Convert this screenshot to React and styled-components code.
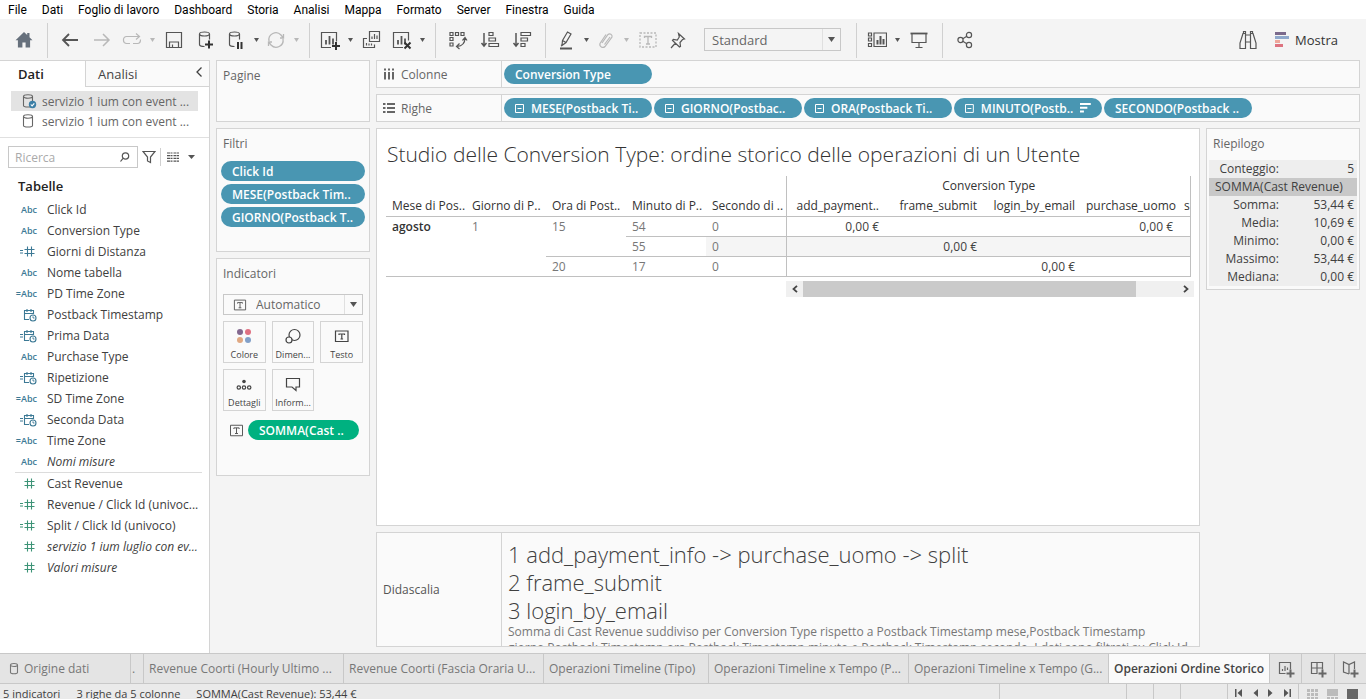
import React from "react";
import styled, { createGlobalStyle } from "styled-components";

const BLUE = "#4996b2";
const GREEN = "#00b180";
const LINE = "#d4d4d4";
const FONT = `"Open Sans", "Noto Sans", sans-serif`;

const GlobalStyle = createGlobalStyle`
  * { box-sizing: border-box; }
  body { margin: 0; }
  body, button, input, select { font-family: ${FONT}; font-size: 12px; color: #404040; }
  button { border: 0; padding: 0; background: none; }
`;

/* ---------- page frame ---------- */
const Page = styled.div`
  height: 100vh;
  display: flex;
  flex-direction: column;
  background: #f4f4f4;
  overflow: hidden;
`;
const MenuBar = styled.nav`
  flex: none;
  display: flex;
  gap: 15px;
  height: 19px;
  padding: 2px 0 0 8px;
  background: #fff;
`;
const MenuItem = styled.button`
  font-family: Roboto, sans-serif;
  color: #000;
  line-height: 17px;
  white-space: nowrap;
`;
const Toolbar = styled.header`
  flex: none;
  display: flex;
  height: 41px;
`;
const ToolGroup = styled.div`
  display: flex;
  align-items: center;
  padding: 0 ${(p) => p.$end || 6}px 0 ${(p) => p.$start ?? 6}px;
`;
const Divider = styled.div`
  width: 1px;
  height: 35px;
  margin-top: 4px;
  background: #d0d0d0;
`;
const IconButton = styled.button`
  display: flex;
  align-items: center;
  justify-content: center;
  width: ${(p) => p.$w || 32}px;
  height: 30px;
  color: ${(p) => (p.$off ? "#b8b8b8" : "#555")};
`;
const CaretButton = styled.button`
  display: flex;
  align-items: center;
  justify-content: center;
  width: 12px;
  height: 30px;
  color: ${(p) => (p.$off ? "#b8b8b8" : "#555")};
`;
const SelectBox = styled.div`
  display: flex;
  align-items: center;
  width: ${(p) => (p.$wide ? "auto" : "137px")};
  height: ${(p) => (p.$wide ? 21 : 23)}px;
  margin-left: ${(p) => (p.$wide ? 0 : 12)}px;
  border: 1px solid #c8c8c8;
  color: #555;
`;
const Select = styled.select`
  flex: 1;
  min-width: 0;
  appearance: none;
  border: 0;
  outline: 0;
  padding: 0 0 0 ${(p) => p.$pad || 0}px;
  background: transparent;
  color: #666;
  font-size: ${(p) => p.$size || 12}px;
`;
const SelectArrow = styled.span`
  display: flex;
  align-items: center;
  justify-content: center;
  align-self: stretch;
  width: 18px;
  border-left: 1px solid #e0e0e0;
`;
const Spacer = styled.div`
  flex: 1;
`;
const ShowButton = styled.button`
  display: flex;
  align-items: center;
  gap: 6px;
  padding: 0 22px 0 11px;
  font-size: 13px;
  color: #333;
`;

const Body = styled.div`
  flex: 1;
  min-height: 0;
  display: flex;
`;

/* ---------- data pane ---------- */
const DataPane = styled.aside`
  width: 210px;
  flex: none;
  background: #fff;
  border: solid ${LINE};
  border-width: 1px 1px 0 0;
`;
const PaneTabs = styled.div`
  display: flex;
  height: 26px;
`;
const ActiveTab = styled.button`
  width: 85px;
  padding-left: 18px;
  text-align: left;
  font-size: 13px;
  font-weight: 600;
  color: #222;
`;
const OtherTab = styled.div`
  flex: 1;
  display: flex;
  align-items: center;
  justify-content: space-between;
  padding: 0 6px 0 12px;
  border: solid ${LINE};
  border-width: 0 0 1px 1px;
  background: #fafafa;
`;
const TabLabel = styled.button`
  font-size: 13px;
  color: #444;
`;
const SourceList = styled.div`
  padding: 4px 11px 6px;
  border-bottom: 1px solid #e0e0e0;
`;
const Source = styled.button`
  display: flex;
  align-items: center;
  gap: 5px;
  width: 100%;
  height: 20px;
  padding-left: 10px;
  background: ${(p) => (p.$selected ? "#e3e3e3" : "transparent")};
  color: #666;
  white-space: nowrap;
`;
const SearchRow = styled.div`
  display: flex;
  align-items: center;
  height: 38px;
  padding-left: 8px;
`;
const SearchBox = styled.label`
  display: flex;
  align-items: center;
  width: 130px;
  height: 22px;
  padding: 0 6px;
  border: 1px solid #c8c8c8;
`;
const SearchInput = styled.input`
  flex: 1;
  min-width: 0;
  border: 0;
  outline: 0;
  padding: 0;
  &::placeholder { color: #aaa; }
`;
const SmallDivider = styled.div`
  width: 1px;
  height: 18px;
  background: #d0d0d0;
`;
const TablesTitle = styled.h2`
  margin: 0 0 3px;
  padding-left: 18px;
  font-size: 13px;
  line-height: 20px;
  font-weight: 600;
  color: #222;
`;
const FieldList = styled.ul`
  list-style: none;
  margin: 0 7px 0 15px;
  padding: 0;
  & + & { border-top: 1px solid #dcdcdc; }
`;
const Field = styled.li`
  display: flex;
  align-items: center;
  height: 21px;
  white-space: nowrap;
  font-style: ${(p) => (p.$italic ? "italic" : "normal")};
`;
const FieldIcon = styled.span`
  display: flex;
  align-items: center;
  justify-content: flex-end;
  width: 22px;
  margin-right: 10px;
  font-size: 9px;
  font-weight: 600;
  font-style: normal;
  color: ${(p) => (p.$measure ? "#3d9377" : "#3c7995")};
`;

/* ---------- shelves and cards ---------- */
const CardColumn = styled.div`
  flex: none;
  width: 154px;
  margin-left: 6px;
  display: flex;
  flex-direction: column;
  gap: 6px;
`;
const Card = styled.section`
  display: flex;
  flex-direction: column;
  min-height: ${(p) => p.$min || 0}px;
  padding: 5px 4px;
  border: 1px solid ${LINE};
  background: #fafafa;
`;
const CardTitle = styled.h3`
  margin: 0 2px 7px;
  font-size: 12px;
  font-weight: 400;
  line-height: 20px;
  color: #666;
`;
const PillStack = styled.div`
  display: flex;
  flex-direction: column;
  gap: 3px;
`;
const Pill = styled.button`
  display: flex;
  align-items: center;
  gap: 7px;
  width: ${(p) => (p.$w ? p.$w + "px" : "auto")};
  height: 20px;
  padding: 0 11px;
  border-radius: 10px;
  background: ${(p) => (p.$measure ? GREEN : BLUE)};
  color: #fff;
  font-weight: 600;
  white-space: nowrap;
`;
const MarksBody = styled.div`
  display: flex;
  flex-direction: column;
  gap: 6px;
  padding: 3px 2px;
`;
const MarkGrid = styled.div`
  display: grid;
  grid-template-columns: repeat(3, 1fr);
  gap: 6px;
`;
const MarkButton = styled.button`
  display: flex;
  flex-direction: column;
  align-items: center;
  justify-content: space-between;
  height: 42px;
  padding: 5px 0 1px;
  border: 1px solid ${LINE};
  font-size: 9px;
  line-height: 13px;
  color: #444;
`;
const MarkPill = styled.div`
  display: flex;
  align-items: center;
  gap: 4px;
  padding: 3px 0 0 6px;
  color: #555;
`;

const Workspace = styled.main`
  flex: 1;
  min-width: 0;
  display: flex;
  flex-direction: column;
  gap: 6px;
  padding: 0 6px 6px;
`;
const Shelf = styled.section`
  flex: none;
  display: flex;
  height: 28px;
  border: 1px solid ${LINE};
  background: #fafafa;
`;
const ShelfLabel = styled.div`
  display: flex;
  align-items: center;
  gap: 6px;
  width: 125px;
  padding-left: 6px;
  border-right: 1px solid ${LINE};
  color: #666;
`;
const ShelfPills = styled.div`
  display: flex;
  align-items: center;
  gap: 2px;
  padding-left: 2px;
`;
const Columns = styled.div`
  flex: 1;
  min-height: 0;
  display: flex;
  align-items: flex-start;
  gap: 6px;
`;
const SheetColumn = styled.div`
  flex: 1;
  min-width: 0;
  align-self: stretch;
  display: flex;
  flex-direction: column;
  gap: 6px;
`;
const Sheet = styled.section`
  flex: 1;
  min-height: 0;
  border: 1px solid ${LINE};
  background: #fff;
  overflow: hidden;
`;
const SheetTitle = styled.h1`
  margin: 10px 10px 7px;
  font-size: 21px;
  line-height: 30px;
  font-weight: 300;
  color: #333;
  white-space: nowrap;
`;
const TableWrap = styled.div`
  padding: 0 8px 0 9px;
`;
const Table = styled.table`
  width: 100%;
  table-layout: fixed;
  border-collapse: collapse;
  line-height: 19px;
`;
const cellBorders = (p) => `
  border-right: ${p.$right ? "1px solid #c0c0c0" : "0"};
  border-bottom: ${p.$bottom ? "1px solid #c0c0c0" : "0"};
`;
const Th = styled.th`
  height: 20px;
  padding: 0 5px 0 6px;
  font-weight: ${(p) => (p.$bold ? 600 : p.$plain ? 400 : 500)};
  text-align: ${(p) => p.$align || "left"};
  vertical-align: top;
  white-space: nowrap;
  overflow: hidden;
  color: ${(p) => (p.$soft ? "#777" : "#333")};
  background: ${(p) => (p.$band ? "#f5f5f5" : "transparent")};
  ${cellBorders}
`;
const Td = styled.td`
  height: 20px;
  padding: 0 5px 0 0;
  text-align: right;
  white-space: nowrap;
  color: #404040;
  background: ${(p) => (p.$band ? "#f5f5f5" : "transparent")};
  ${cellBorders}
`;
const ScrollBar = styled.div`
  display: flex;
  height: 16px;
  margin: 4px 5px 0 409px;
  background: #f0f0f0;
`;
const ScrollArrow = styled.button`
  display: flex;
  align-items: center;
  justify-content: center;
  width: 17px;
  color: #444;
`;
const ScrollTrack = styled.div`
  flex: 1;
`;
const ScrollThumb = styled.div`
  width: 89%;
  height: 100%;
  background: #cacaca;
`;

const Caption = styled.section`
  flex: none;
  display: flex;
  height: 115px;
  border: 1px solid ${LINE};
  background: #fafafa;
  overflow: hidden;
`;
const CaptionLabel = styled.div`
  flex: none;
  display: flex;
  align-items: center;
  width: 125px;
  padding-left: 6px;
  border-right: 1px solid ${LINE};
  color: #555;
`;
const CaptionText = styled.div`
  padding: 7px 0 0 6px;
`;
const CaptionLine = styled.p`
  margin: 0;
  font-size: 22px;
  line-height: 28px;
  font-weight: 300;
  white-space: pre;
`;
const CaptionNote = styled.p`
  margin: 0;
  line-height: 16px;
  color: #777;
`;

const Summary = styled.section`
  flex: none;
  width: 154px;
  padding: 5px 2px 3px;
  border: 1px solid ${LINE};
  background: #fafafa;
`;
const SummaryTitle = styled.h3`
  margin: 0 4px 6px;
  font-size: 12px;
  font-weight: 400;
  line-height: 20px;
  color: #666;
`;
const SummaryTable = styled.table`
  width: 100%;
  border-collapse: collapse;
  background: #eee;
  line-height: 18px;
`;
const SummaryHead = styled.th`
  padding: 0 0 0 6px;
  font-weight: 400;
  text-align: left;
  white-space: nowrap;
  background: #c8c8c8;
`;
const SummaryKey = styled.th`
  width: 70px;
  padding: 0;
  font-weight: 400;
  text-align: right;
`;
const SummaryValue = styled.td`
  padding: 0 3px 0 0;
  text-align: right;
`;

/* ---------- sheet tabs and status ---------- */
const SheetTabs = styled.nav`
  flex: none;
  display: flex;
  height: 31px;
  border: solid #c8c8c8;
  border-width: 1px 0;
  background: #e4e4e4;
`;
const SheetTab = styled.button`
  display: flex;
  align-items: center;
  gap: 3px;
  width: ${(p) => p.$w}px;
  padding-left: ${(p) => p.$pad || 5}px;
  border-right: 1px solid #c8c8c8;
  background: ${(p) => (p.$active ? "#fafafa" : "transparent")};
  font-weight: ${(p) => (p.$active ? 600 : 400)};
  color: ${(p) => (p.$active ? "#444" : "#777")};
  white-space: nowrap;
`;
const NewTab = styled.button`
  flex: 1;
  display: flex;
  align-items: center;
  justify-content: center;
  border-right: 1px solid #c8c8c8;
  color: #666;
  &:last-child { border-right: 0; }
`;
const StatusBar = styled.footer`
  flex: none;
  display: flex;
  height: 15px;
  line-height: 20px;
  background: #eaeaea;
  overflow: hidden;
`;
const StatusText = styled.span`
  padding-left: 3px;
  margin-right: 13px;
  font-size: 11px;
  white-space: nowrap;
`;
const StatusCell = styled.div`
  flex: none;
  display: flex;
  justify-content: space-around;
  width: ${(p) => p.$w}px;
  padding: ${(p) => (p.$w > 60 ? "0 3px" : "0")};
  border-left: 1px solid #c8c8c8;
`;
const StatusButton = styled.button`
  display: flex;
  padding-top: 5px;
  color: ${(p) => p.$color || "#555"};
`;

/* ---------- drawings ---------- */
const Svg = ({ w = 20, h = 20, children, ...rest }) => (
  <svg width={w} height={h} viewBox={`0 0 ${w} ${h}`} fill="none" stroke="currentColor" strokeWidth="1.2" aria-hidden="true" {...rest}>
    {children}
  </svg>
);
const Down = ({ w = 5, h = 4 }) => (
  <svg width={w} height={h} viewBox="0 0 5 4" preserveAspectRatio="none" aria-hidden="true"><path d="M0 0h5L2.500 4z" fill="currentColor" /></svg>
);
const Home = () => (
  <Svg w={18} h={18} stroke="none"><path d="M9 1 0.500 9.200h2.400V16.500h4.500v-5h3.200v5h4.500V9.200h2.400L14.500 6.300V2h-2.300v2z" fill="#66707c" /></Svg>
);
const Back = () => <Svg strokeWidth="1.8"><path d="M18 10H3M9 4l-6 6 6 6" /></Svg>;
const Forward = () => <Svg strokeWidth="1.5"><path d="M2 10h15M11 4l6 6-6 6" /></Svg>;
const Redo = () => <Svg><path d="M8 13.500H4.500a3 3 0 0 1-3-3V9.500a3 3 0 0 1 3-3H17M14 3.500l3.500 3-3.500 3M11 13.500h4.500q3 0 3-4" /></Svg>;
const Save = () => <Svg><path d="M2.500 2.500h15v15h-15zM5.500 17v-5h9v5M8.500 17v-2.500" /></Svg>;
const Cylinder = ({ children }) => (
  <Svg><path d="M3.500 4v10.500c0 1.300 2 2 5 2M13.500 4v5.500" /><ellipse cx="8.500" cy="4" rx="5" ry="2" />{children}</Svg>
);
const Refresh = () => <Svg strokeWidth="1.3"><path d="M3 11a7 7 0 0 1 12-6l2 2.500M17 9a7 7 0 0 1-12 6l-2-2.500M17.500 4v4h-3.500M2.500 16v-4H6" /></Svg>;
const Bars = () => <path d="M6 14.500V10M9.500 14.500V6M13 14.500V8.500" strokeWidth="1.800" />;
const NewSheet = () => (
  <Svg><path d="M11 17.500H1.500v-15h15v9" /><Bars /><path d="M12 16h8M16 12v8" stroke="#333" strokeWidth="2" /></Svg>
);
const ClearSheet = () => (
  <Svg><path d="M11 17.500H1.500v-15h15v8" /><Bars /><path d="m12.500 12.500 6 6m0-6-6 6" stroke="#333" strokeWidth="2" /></Svg>
);
const Duplicate = () => (
  <Svg><path d="M7.500 1.500h10v10h-10zM5 8.500H1.500v9h11v-3M10 9V6.500M12.500 9V4M15 9V5.500M4.500 15.500V13M7 15.500v-2M9.500 15.500v-2" /></Svg>
);
const Swap = () => (
  <Svg><path d="M2 2.500h3v3H2zM7.500 2.500h3v3h-3zM13 2.500h3v3h-3zM2 7.500h3v3H2zM2 13h3v3H2zM17 8c0 5-3 8-8 8.500M14.500 10.500l2.500-3 2 3M11.500 13.500l-3 3 3 2.500" /></Svg>
);
const SortAsc = () => (
  <Svg><path d="M4 3v12M1.500 13 4 16l2.500-3" strokeWidth="1.500" /><path d="M9 2.500h4v3H9zM9 8h6.500v3H9zM9 13.500h9.500v3H9z" /></Svg>
);
const SortDesc = () => (
  <Svg><path d="M4 3v12M1.500 13 4 16l2.500-3" strokeWidth="1.500" /><path d="M9 2.500h9.500v3H9zM9 8h6.500v3H9zM9 13.500h4v3H9z" /></Svg>
);
const Marker = () => (
  <Svg><path d="M4 18.500h12" strokeWidth="2" /><path d="m6.500 10.500 5-8.500 3.500 2-5 8.500-4 3zM6.500 10.500l3.500 2M5 15.500l1.500-1" /></Svg>
);
const Clip = () => <Svg><path d="M6 13 12 4.500a2.500 2.500 0 0 1 4 2.500L9 16.500a3 3 0 0 1-5-3l6-9M8.500 14.500 14 7" /></Svg>;
const TextFrame = ({ dashed, size = 20 }) => (
  <svg width={size} height={size} viewBox="0 0 20 20" fill="none" stroke="currentColor" strokeWidth="1.3" aria-hidden="true">
    <path d="M2 3h16v14H2z" strokeDasharray={dashed ? "2 1.500" : undefined} />
    <path d="M6.500 8V6.500h7V8M10 6.500v7.500M8 14h4" />
  </svg>
);
const Pin = () => <Svg w={18} h={18}><path d="m9.500 2.500 6 5.500-2 .5-2.500 3 .5 4-1 .5L3.500 9.500l.8-1 4 .5 2-3zM6.500 12l-4.500 5" /></Svg>;
const ShowCards = () => (
  <Svg><path d="M1.500 3h3v3h-3zM1.500 8h3v3h-3zM1.500 13.500h3v3h-3zM7 3h12.500v13.500H7z" /><path d="M10.500 14.500V10M13.500 14.500V6M16.500 14.500V9" strokeWidth="2" /></Svg>
);
const Present = () => <Svg><path d="M1.500 3.500h17" strokeWidth="1.800" /><path d="M3 4v8.500h14V4M10 12.500v4.500M6.500 17.500h7" /></Svg>;
const Share = () => (
  <Svg><circle cx="5.500" cy="10" r="2.600" /><circle cx="14" cy="5" r="2.600" /><circle cx="14" cy="15" r="2.600" /><path d="m7.800 8.700 4-2.400m-4 5 4 2.400" /></Svg>
);
const Binoculars = () => (
  <Svg><path d="M5 3.500 2 13v5.500h5.500V3.500zM15 3.500 18 13v5.500h-5.500V3.500zM5.500 3.500V1.500h2v2M14.500 3.500V1.500h-2v2M7.500 5h5M7.500 12h5" /></Svg>
);
const ShowMe = () => (
  <svg width="14" height="16" viewBox="0 0 14 16" aria-hidden="true">
    <path fill="#7b6a8c" d="M0 0h11v3H0z" /><path fill="#8fa8cc" d="M0 4h14v3H0z" />
    <path fill="#eea79b" d="M0 8h5v3H0z" /><path fill="#dd7380" d="M0 12h8v3H0z" />
  </svg>
);
const Database = ({ checked }) => (
  <Svg w={16} h={16} strokeWidth="1.100">
    <path d="M2.500 3.500v9c0 1 2 1.500 4.500 1.500s4.500-.5 4.500-1.500v-9" /><ellipse cx="7" cy="3.500" rx="4.500" ry="1.700" />
    {checked && <><circle cx="11.500" cy="11.500" r="3.700" fill="#3c7fa6" stroke="none" /><path d="m9.800 11.500 1.300 1.400 2.200-2.600" stroke="#fff" /></>}
  </Svg>
);
const SmallDatabase = () => (
  <Svg w={13} h={14} strokeWidth="1.100"><path d="M2.500 3v7.500c0 .8 1.500 1.200 3.500 1.200s3.500-.4 3.500-1.200V3" /><ellipse cx="6" cy="3" rx="3.500" ry="1.500" /></Svg>
);
const Search = () => <Svg w={12} h={12} color="#555"><circle cx="6.500" cy="5" r="3.200" /><path d="M4 7.300 1.500 10.500" /></Svg>;
const Funnel = () => <Svg w={14} h={14}><path d="M1 1.500h12L8.500 7v5.500l-3-1.500V7z" /></Svg>;
const ListView = () => <Svg w={13} h={10}><path d="M0 1h13M0 3.700h13M0 6.400h13M0 9.100h13" strokeDasharray="3 .5 2 1" /></Svg>;
const ChevronLeft = () => <Svg w={8} h={12} strokeWidth="1.300"><path d="M6.500 1.500 2 6l4.500 4.500" /></Svg>;
const Equal = () => <path d="M0 5.500h3M0 8h3" strokeWidth="1" />;
const Hash = ({ calc }) => (
  <Svg w={17} h={13}>{calc && <Equal />}<path d="M7.500 1.500v10M11.500 1.500v10M4.500 4.500h10M4.500 8.500h10" strokeWidth="1.100" /></Svg>
);
const CalendarClock = ({ calc }) => (
  <Svg w={17} h={14}>
    {calc && <Equal />}
    <path d="M9 11.500H4.500v-9h9V6M4.500 5.500h9M7 1v3M11 1v3" strokeWidth="1.100" />
    <circle cx="13" cy="10" r="3" strokeWidth="1.100" /><path d="M13 8.300V10h1.500" strokeWidth=".9" />
  </Svg>
);
const Minus = () => <Svg w={9} h={9} strokeWidth="1"><path d="M.5.500h8v8h-8zM2.500 4.500h4" /></Svg>;
const SortMark = () => <Svg w={11} h={10} strokeWidth="2"><path d="M0 1h11M0 4.800h7.500M0 8.600h4" /></Svg>;
const ColumnsIcon = () => <Svg w={12} h={12} strokeWidth="2"><path d="M2 4v7.500M6 4v7.500M10 4v7.500M2 .5v2M6 .5v2M10 .5v2" /></Svg>;
const RowsIcon = () => <Svg w={12} h={12} strokeWidth="2"><path d="M4 2h8M4 6h8M4 10h8M0 2h2.500M0 6h2.500M0 10h2.500" /></Svg>;
const Colors = () => (
  <Svg w={18} h={18} stroke="none"><circle cx="5" cy="5" r="3" fill="#83688f" /><circle cx="13" cy="5" r="3" fill="#e07182" /><circle cx="5" cy="13" r="3" fill="#e0a882" /><circle cx="13" cy="13" r="3" fill="#82a0c8" /></Svg>
);
const SizeIcon = () => <Svg w={18} h={18}><circle cx="10.500" cy="8" r="5.500" /><circle cx="5" cy="13" r="3" fill="#fafafa" /></Svg>;
const MarkText = () => <Svg w={18} h={18}><path d="M2.500 4h12.500v10.500H2.500zM6 8V7h5.500v1M8.800 7v5M7.500 12h2.600" /></Svg>;
const Detail = () => <Svg w={18} h={18}><circle cx="9" cy="6.500" r="1.800" fill="currentColor" stroke="none" /><circle cx="3.800" cy="12.500" r="1.700" /><circle cx="9" cy="12.500" r="1.700" /><circle cx="14.200" cy="12.500" r="1.700" /></Svg>;
const Tooltip = () => <Svg w={18} h={18}><path d="M2.500 3.500h13v8.500h-3.500v3.500L8 12H2.500z" /></Svg>;
const Angle = ({ right }) => <Svg w={6} h={8} strokeWidth="1.800"><path d={right ? "M1 .8 4.500 4 1 7.200" : "M5 .8 1.500 4 5 7.200"} /></Svg>;
const NewTabIcon = ({ kind }) => (
  <Svg w={18} h={18}>
    {kind === "sheet" && <path d="M8.500 13.500h-6v-11h11v7M5.500 11V9M8 11V6M10.500 10V7.500" />}
    {kind === "dash" && <path d="M8.500 13.500h-6v-11h11v7M2.500 8h11M8 2.500v11" />}
    {kind === "story" && <path d="M8 14 2.500 12V2l5.500 2.500L13.500 2v7M8 4.500V14" />}
    <path d="M9.500 13.500h8M13.500 9.500v8" strokeWidth="2" />
  </Svg>
);
const Step = ({ back, bar }) => (
  <svg width="8" height="8" viewBox="0 0 8 8" aria-hidden="true">
    <path fill="currentColor" d={back ? "M7 0v8L2.500 4z" : "M1 0v8l4.500-4z"} />
    {bar && <path fill="currentColor" d={back ? "M0 0h1.500v8H0z" : "M6.500 0H8v8H6.500z"} />}
  </svg>
);
const Tiles = ({ kind }) => (
  <svg width="11" height="11" viewBox="0 0 11 11" fill="currentColor" aria-hidden="true">
    {kind === "grid" && [0, 4, 8].map((y) => [0, 4, 8].map((x) => <path key={`${x}-${y}`} d={`M${x} ${y}h3v3h-3z`} />))}
    {kind === "film" && <path d="M0 0h11v7H0zM0 8h3v3H0zM4 8h3v3H4zM8 8h3v3H8z" />}
    {kind === "full" && <path d="M0 0h11v11H0z" />}
  </svg>
);

/* ---------- content ---------- */
const MENU = ["File", "Dati", "Foglio di lavoro", "Dashboard", "Storia", "Analisi", "Mappa", "Formato", "Server", "Finestra", "Guida"];
const DIMENSIONS = [
  ["abc", "Click Id"], ["abc", "Conversion Type"], ["=hash", "Giorni di Distanza"], ["abc", "Nome tabella"],
  ["=abc", "PD Time Zone"], ["date", "Postback Timestamp"], ["=date", "Prima Data"], ["abc", "Purchase Type"],
  ["=date", "Ripetizione"], ["=abc", "SD Time Zone"], ["=date", "Seconda Data"], ["=abc", "Time Zone"], ["abc", "Nomi misure", true],
];
const MEASURES = [
  ["hash", "Cast Revenue"], ["=hash", "Revenue / Click Id (univoc..."], ["=hash", "Split / Click Id (univoco)"],
  ["hash", "servizio 1 ium luglio con ev...", true], ["hash", "Valori misure", true],
];
const SUMMARY = [["Somma:", "53,44 €"], ["Media:", "10,69 €"], ["Minimo:", "0,00 €"], ["Massimo:", "53,44 €"], ["Mediana:", "0,00 €"]];
const TABS = [
  [200, "Revenue Coorti (Hourly Ultimo ..."], [200, "Revenue Coorti (Fascia Oraria U..."], [165, "Operazioni Timeline (Tipo)"],
  [200, "Operazioni Timeline x Tempo (P..."], [200, "Operazioni Timeline x Tempo (G..."],
];

function KindIcon({ kind }) {
  const calc = kind[0] === "=";
  if (kind.endsWith("abc")) return calc ? "=Abc" : "Abc";
  if (kind.endsWith("hash")) return <Hash calc={calc} />;
  return <CalendarClock calc={calc} />;
}
const Fields = ({ items, measure }) => (
  <FieldList>
    {items.map(([kind, label, italic]) => (
      <Field key={label} $italic={italic}>
        <FieldIcon $measure={measure}><KindIcon kind={kind} /></FieldIcon>
        {label}
      </Field>
    ))}
  </FieldList>
);
const Tool = ({ label, w, off, children }) => <IconButton aria-label={label} $w={w} $off={off}>{children}</IconButton>;
const Caret = ({ off }) => <CaretButton aria-label="Opzioni" $off={off}><Down /></CaretButton>;

function TopToolbar() {
  return (
    <Toolbar>
      <ToolGroup $start={8} $end={7}><Tool label="Home"><Home /></Tool></ToolGroup>
      <Divider />
      <ToolGroup $end={7}>
        <Tool label="Annulla"><Back /></Tool>
        <Tool label="Ripeti" off><Forward /></Tool>
        <Tool label="Riesegui" w={28} off><Redo /></Tool><Caret off />
        <Tool label="Salva"><Save /></Tool>
        <Tool label="Nuova origine dati"><Cylinder><path d="M9 14.500h8M13 10.500v8" stroke="#333" strokeWidth="2" /></Cylinder></Tool>
        <Tool label="Sospendi aggiornamenti" w={28}><Cylinder><path d="M12 12v7M15.500 12v7" stroke="#333" strokeWidth="2" /></Cylinder></Tool><Caret />
        <Tool label="Aggiorna" w={28} off><Refresh /></Tool><Caret off />
      </ToolGroup>
      <Divider />
      <ToolGroup $end={7}>
        <Tool label="Nuovo foglio" w={28}><NewSheet /></Tool><Caret />
        <Tool label="Duplica"><Duplicate /></Tool>
        <Tool label="Cancella" w={28}><ClearSheet /></Tool><Caret />
      </ToolGroup>
      <Divider />
      <ToolGroup $end={7}>
        <Tool label="Scambia"><Swap /></Tool>
        <Tool label="Ordine crescente"><SortAsc /></Tool>
        <Tool label="Ordine decrescente"><SortDesc /></Tool>
      </ToolGroup>
      <Divider />
      <ToolGroup $end={15}>
        <Tool label="Evidenzia" w={28}><Marker /></Tool><Caret />
        <Tool label="Raggruppa" w={28} off><Clip /></Tool><Caret off />
        <Tool label="Etichette" off><TextFrame dashed /></Tool>
        <Tool label="Blocca" w={28}><Pin /></Tool>
        <SelectBox>
          <Select aria-label="Adatta" $size={13} $pad={7} defaultValue="Standard"><option>Standard</option></Select>
          <SelectArrow><Down w={7} h={5} /></SelectArrow>
        </SelectBox>
      </ToolGroup>
      <Divider />
      <ToolGroup $end={7}>
        <Tool label="Mostra schede" w={28}><ShowCards /></Tool><Caret />
        <Tool label="Presentazione"><Present /></Tool>
      </ToolGroup>
      <Divider />
      <ToolGroup><Tool label="Condividi"><Share /></Tool></ToolGroup>
      <Spacer />
      <ToolGroup>
        <Tool label="Cerca"><Binoculars /></Tool>
        <ShowButton><ShowMe />Mostra</ShowButton>
      </ToolGroup>
    </Toolbar>
  );
}

function Crosstab() {
  return (
    <Table>
      <colgroup>
        <col width="80" /><col width="80" /><col width="80" /><col width="80" /><col width="80" />
        <col width="98" /><col width="98" /><col width="98" /><col width="98" /><col />
      </colgroup>
      <thead>
        <tr><Th colSpan="5" $right /><Th colSpan="5" $align="center" $right>Conversion Type</Th></tr>
        <tr>
          <Th $bottom>Mese di Pos..</Th><Th $bottom>Giorno di P..</Th><Th $bottom>Ora di Post..</Th>
          <Th $bottom>Minuto di P..</Th><Th $bottom $right>Secondo di ..</Th>
          <Th $bottom $align="right">add_payment..</Th><Th $bottom $align="right">frame_submit</Th>
          <Th $bottom $align="right">login_by_email</Th><Th $bottom $align="right">purchase_uomo</Th><Th $bottom $right>split</Th>
        </tr>
      </thead>
      <tbody>
        <tr>
          <Th rowSpan="3" $bold $bottom>agosto</Th><Th rowSpan="3" $plain $soft $bottom>1</Th>
          <Th rowSpan="2" $plain $soft $bottom>15</Th><Th $plain $soft $bottom>54</Th><Th $plain $soft $bottom $right>0</Th>
          <Td $bottom>0,00 €</Td><Td $bottom /><Td $bottom /><Td $bottom>0,00 €</Td><Td $bottom $right />
        </tr>
        <tr>
          <Th $plain $soft $bottom>55</Th><Th $plain $soft $band $bottom $right>0</Th>
          <Td $band $bottom /><Td $band $bottom>0,00 €</Td><Td $band $bottom /><Td $band $bottom /><Td $band $bottom $right />
        </tr>
        <tr>
          <Th $plain $soft $bottom>20</Th><Th $plain $soft $bottom>17</Th><Th $plain $soft $bottom $right>0</Th>
          <Td $bottom /><Td $bottom /><Td $bottom>0,00 €</Td><Td $bottom /><Td $bottom $right />
        </tr>
      </tbody>
    </Table>
  );
}

export default function App() {
  return (
    <Page>
      <GlobalStyle />
      <MenuBar>{MENU.map((m) => <MenuItem key={m}>{m}</MenuItem>)}</MenuBar>
      <TopToolbar />
      <Body>
        <DataPane>
          <PaneTabs>
            <ActiveTab>Dati</ActiveTab>
            <OtherTab><TabLabel>Analisi</TabLabel><button aria-label="Riduci"><ChevronLeft /></button></OtherTab>
          </PaneTabs>
          <SourceList>
            <Source $selected><Database checked />servizio 1 ium con event ...</Source>
            <Source><Database />servizio 1 ium con event ...</Source>
          </SourceList>
          <SearchRow>
            <SearchBox><SearchInput aria-label="Ricerca" placeholder="Ricerca" /><Search /></SearchBox>
            <Tool label="Filtra" w={22}><Funnel /></Tool>
            <SmallDivider />
            <Tool label="Vista elenco" w={24}><ListView /></Tool>
            <CaretButton aria-label="Menu"><Down w={7} h={4} /></CaretButton>
          </SearchRow>
          <TablesTitle>Tabelle</TablesTitle>
          <Fields items={DIMENSIONS} />
          <Fields items={MEASURES} measure />
        </DataPane>

        <CardColumn>
          <Card $min={62}><CardTitle>Pagine</CardTitle></Card>
          <Card $min={124}>
            <CardTitle>Filtri</CardTitle>
            <PillStack><Pill>Click Id</Pill><Pill>MESE(Postback Tim..</Pill><Pill>GIORNO(Postback T..</Pill></PillStack>
          </Card>
          <Card $min={218}>
            <CardTitle>Indicatori</CardTitle>
            <MarksBody>
              <SelectBox $wide>
                <Tool label="Tipo di indicatore"><TextFrame size={14} /></Tool>
                <Select aria-label="Indicatore" defaultValue="Automatico"><option>Automatico</option></Select>
                <SelectArrow><Down w={7} h={5} /></SelectArrow>
              </SelectBox>
              <MarkGrid>
                <MarkButton><Colors />Colore</MarkButton>
                <MarkButton><SizeIcon />Dimen...</MarkButton>
                <MarkButton><MarkText />Testo</MarkButton>
                <MarkButton><Detail />Dettagli</MarkButton>
                <MarkButton><Tooltip />Inform...</MarkButton>
              </MarkGrid>
              <MarkPill><TextFrame size={15} /><Pill $measure $w={111}>SOMMA(Cast ..</Pill></MarkPill>
            </MarksBody>
          </Card>
        </CardColumn>

        <Workspace>
          <Shelf>
            <ShelfLabel><ColumnsIcon />Colonne</ShelfLabel>
            <ShelfPills><Pill $w={148}>Conversion Type</Pill></ShelfPills>
          </Shelf>
          <Shelf>
            <ShelfLabel><RowsIcon />Righe</ShelfLabel>
            <ShelfPills>
              <Pill $w={148}><Minus />MESE(Postback Ti..</Pill>
              <Pill $w={148}><Minus />GIORNO(Postbac..</Pill>
              <Pill $w={148}><Minus />ORA(Postback Ti..</Pill>
              <Pill $w={148}><Minus />MINUTO(Postb..<SortMark /></Pill>
              <Pill $w={148}>SECONDO(Postback ..</Pill>
            </ShelfPills>
          </Shelf>
          <Columns>
            <SheetColumn>
              <Sheet>
                <SheetTitle>Studio delle Conversion Type: ordine storico delle operazioni di un Utente</SheetTitle>
                <TableWrap><Crosstab /></TableWrap>
                <ScrollBar>
                  <ScrollArrow aria-label="Scorri a sinistra"><Angle /></ScrollArrow>
                  <ScrollTrack><ScrollThumb /></ScrollTrack>
                  <ScrollArrow aria-label="Scorri a destra"><Angle right /></ScrollArrow>
                </ScrollBar>
              </Sheet>
              <Caption>
                <CaptionLabel>Didascalia</CaptionLabel>
                <CaptionText>
                  <CaptionLine>1 add_payment_info -&gt; purchase_uomo -&gt; split</CaptionLine>
                  <CaptionLine>2 frame_submit</CaptionLine>
                  <CaptionLine>3 login_by_email</CaptionLine>
                  <CaptionNote>
                    Somma di Cast Revenue suddiviso per Conversion Type rispetto a Postback Timestamp mese,Postback Timestamp
                    giorno,Postback Timestamp ora,Postback Timestamp minuto e Postback Timestamp secondo. I dati sono filtrati su Click Id
                  </CaptionNote>
                </CaptionText>
              </Caption>
            </SheetColumn>
            <Summary>
              <SummaryTitle>Riepilogo</SummaryTitle>
              <SummaryTable>
                <tbody>
                  <tr><SummaryKey>Conteggio:</SummaryKey><SummaryValue>5</SummaryValue></tr>
                  <tr><SummaryHead colSpan="2">SOMMA(Cast Revenue)</SummaryHead></tr>
                  {SUMMARY.map(([k, v]) => <tr key={k}><SummaryKey>{k}</SummaryKey><SummaryValue>{v}</SummaryValue></tr>)}
                </tbody>
              </SummaryTable>
            </Summary>
          </Columns>
        </Workspace>
      </Body>

      <SheetTabs>
        <SheetTab $w={131} $pad={8}><SmallDatabase />Origine dati</SheetTab>
        <SheetTab $w={13} $pad={1}>.</SheetTab>
        {TABS.map(([w, t]) => <SheetTab key={t} $w={w}>{t}</SheetTab>)}
        <SheetTab $w={161} $active>Operazioni Ordine Storico</SheetTab>
        <NewTab aria-label="Nuovo foglio"><NewTabIcon kind="sheet" /></NewTab>
        <NewTab aria-label="Nuova dashboard"><NewTabIcon kind="dash" /></NewTab>
        <NewTab aria-label="Nuova storia"><NewTabIcon kind="story" /></NewTab>
      </SheetTabs>
      <StatusBar>
        <StatusText>5 indicatori</StatusText>
        <StatusText>3 righe da 5 colonne</StatusText>
        <StatusText>SOMMA(Cast Revenue): 53,44 €</StatusText>
        <Spacer />
        <StatusCell $w={127} /><StatusCell $w={27} /><StatusCell $w={27} /><StatusCell $w={47} />
        <StatusCell $w={71}>
          <StatusButton aria-label="Primo"><Step back bar /></StatusButton>
          <StatusButton aria-label="Precedente"><Step back /></StatusButton>
          <StatusButton aria-label="Successivo"><Step /></StatusButton>
          <StatusButton aria-label="Ultimo"><Step bar /></StatusButton>
        </StatusCell>
        <StatusCell $w={68}>
          <StatusButton aria-label="Riquadri" $color="#bbb"><Tiles kind="grid" /></StatusButton>
          <StatusButton aria-label="Pellicola" $color="#bbb"><Tiles kind="film" /></StatusButton>
          <StatusButton aria-label="Schede" $color="#666"><Tiles kind="full" /></StatusButton>
        </StatusCell>
      </StatusBar>
    </Page>
  );
}
